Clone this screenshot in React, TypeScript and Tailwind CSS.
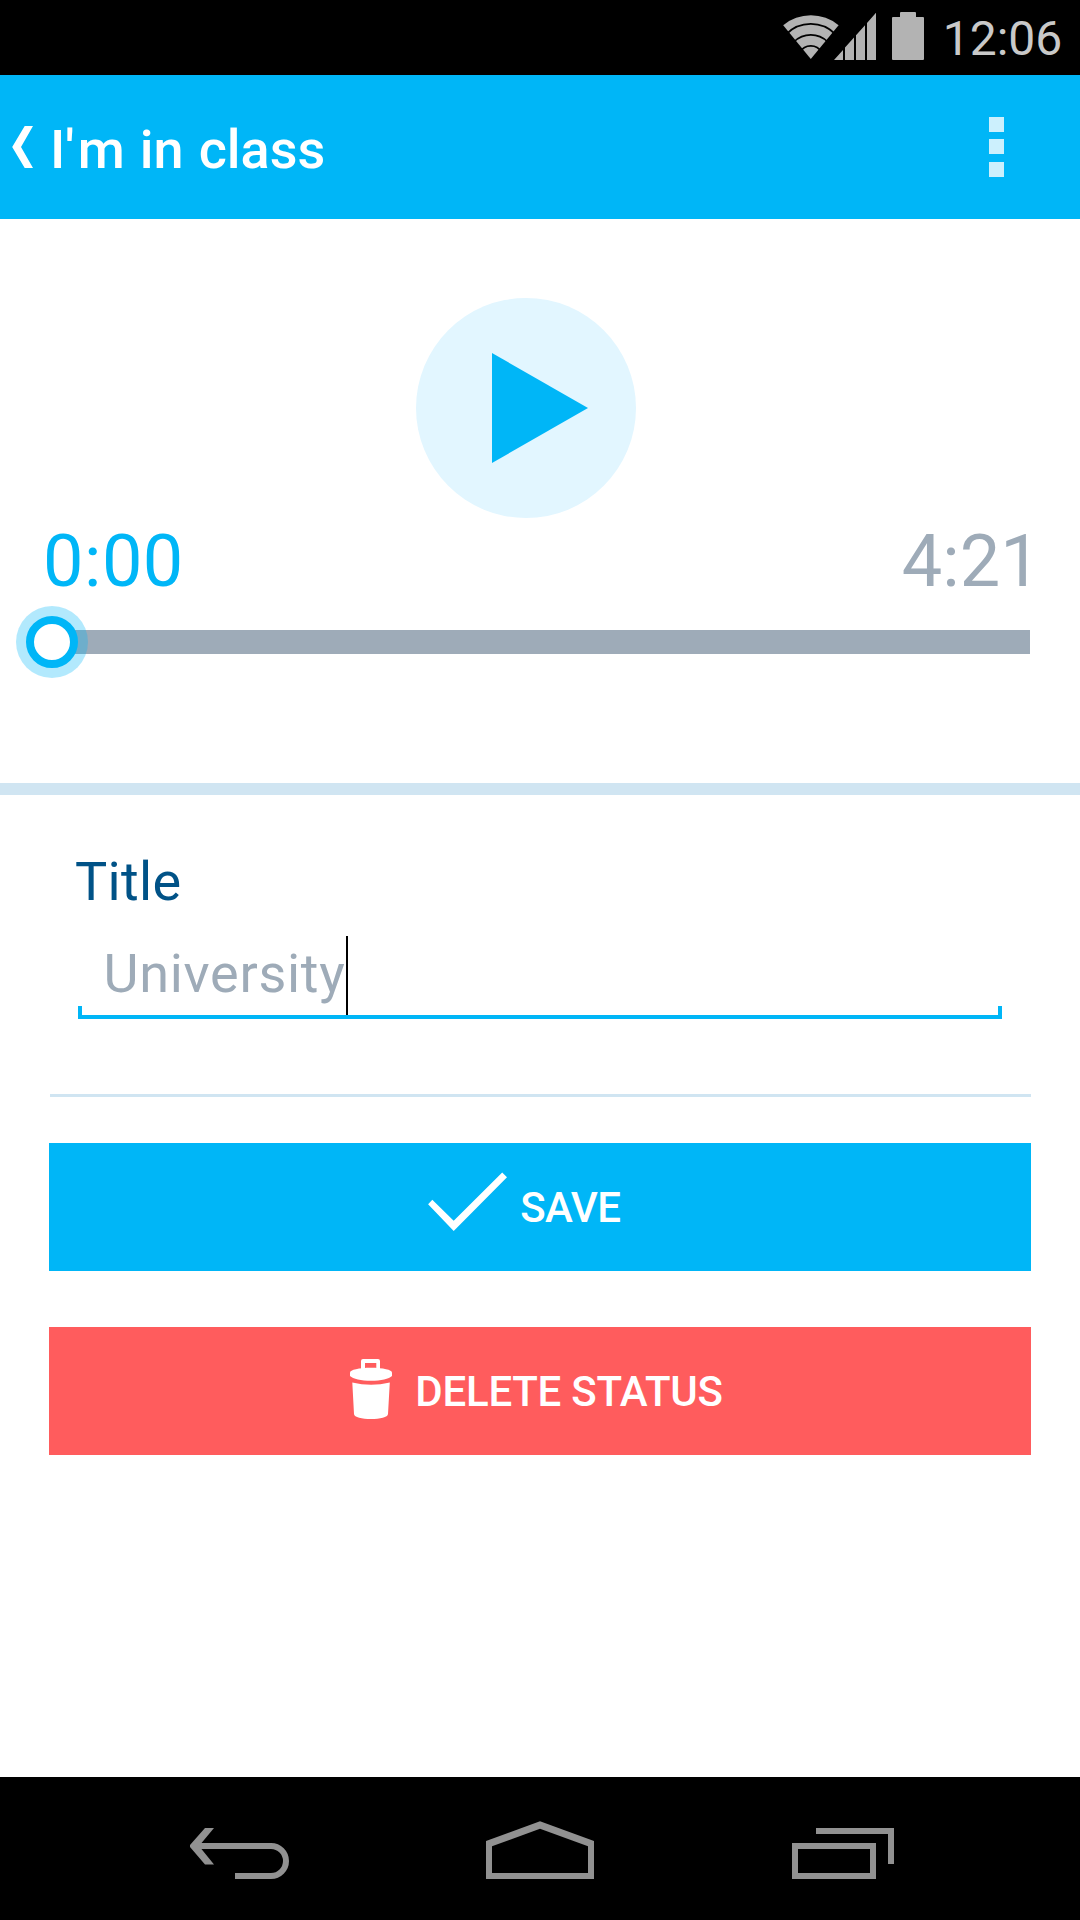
function StatusBar() {
  return (
    <div className="flex h-[75px] items-start bg-black">
      <svg className="ml-[783px] mt-3 h-12 w-[142px] shrink-0" viewBox="783 12 142 48" fill="#b3b3b3">
        <path d="M810.8 59 L783.2 25.2 A43.8 43.8 0 0 1 838.6 25.2 Z" />
        <g fill="none" stroke="#000" strokeWidth="1.8">
          <path d="M786 34.3 A34.6 34.6 0 0 1 835.6 34.3" />
          <path d="M794 41.8 A23.8 23.8 0 0 1 827.6 41.8" />
          <path d="M800 52.2 A12.4 12.4 0 0 1 821.6 52.2" />
        </g>
        <path d="M834 60 L843 50 V60 Z M845 47.6 L854 37.6 V60 H845 Z M856 35.3 L865 25.2 V60 H856 Z M867 23 L876 12.7 V60 H867 Z" />
        <path d="M893 17 H900 V13 Q900 12 901 12 H915 Q916 12 916 13 V17 H923 Q924 17 924 18 V59 Q924 60 923 60 H893 Q892 60 892 59 V18 Q892 17 893 17 Z" />
      </svg>
      <span className="ml-[17.7px] mt-[10px] text-[48px] leading-[57px] whitespace-nowrap text-[#c9c9c9]">12:06</span>
    </div>
  );
}

function Header() {
  return (
    <header className="flex h-36 items-center bg-[#00b6f7] text-white">
      <svg className="ml-3 h-[42px] w-[22px]" viewBox="0 0 22 42" fill="currentColor">
        <path d="M12.7 0 H21 L9 21 L21 42 H12.7 L0.2 21 Z" />
      </svg>
      <h1 className="ml-4 mt-[5px] text-[54px] leading-[63px] font-medium [word-spacing:1.6px] whitespace-nowrap">
        I<span className="tracking-[3.4px]">'</span>m in class
      </h1>
      <button aria-label="More options" className="mr-[76px] ml-auto flex h-[60px] w-[15px] flex-col">
        <span className="h-[15px] w-full bg-[#ccf0fd]" />
        <span className="mt-[7px] h-[15px] w-full bg-[#ccf0fd]" />
        <span className="mt-2 h-[15px] w-full bg-[#ccf0fd]" />
      </button>
    </header>
  );
}

function Player() {
  return (
    <section className="h-[576px] border-b-[12px] border-[#d0e5f2] pt-[79px]">
      <button aria-label="Play" className="ml-[416px] block size-[220px] rounded-full bg-[#e2f6ff]">
        <svg viewBox="0 0 220 220" fill="#00b6f7">
          <path d="M76 55 L172 110 L76 165 Z" />
        </svg>
      </button>
      <div className="mt-px flex justify-between pr-[39.4px] pl-[43px] text-[72px] leading-[85px]">
        <span className="tracking-[0.5px] text-[#00b6f7]">0:00</span>
        <span className="text-[#9eabb8]">4:21</span>
      </div>
      <div className="relative mt-[26px] mr-[50px] ml-[52px] h-6 bg-[#9eabb8]">
        <div className="absolute -top-6 -left-9 flex size-[72px] items-center justify-center rounded-full bg-[#00b6f7]/30">
          <div className="size-[52px] rounded-full border-8 border-[#00b6f7] bg-white" />
        </div>
      </div>
    </section>
  );
}

function Form() {
  return (
    <section className="flex flex-col pt-[55px]">
      <label className="ml-[75px] text-[54px] leading-[63px] tracking-[0.35px] text-[#005287]">Title</label>
      <div className="relative mt-[23px] mr-[78px] ml-[78px] flex h-[83px] items-start border-b-4 border-[#00b6f7]">
        <span className="mt-[6px] ml-[25.5px] w-[242.5px] text-[54px] leading-[63px] tracking-[0.7px] whitespace-nowrap text-[#9eabb8]">University</span>
        <span className="h-[79px] w-[2px] bg-black" />
        <span className="absolute bottom-0 left-0 h-[9px] w-1 bg-[#00b6f7]" />
        <span className="absolute right-0 bottom-0 h-[9px] w-1 bg-[#00b6f7]" />
      </div>
      <hr className="mt-[75px] mr-[49px] ml-[50px] h-[3px] border-0 bg-[#d0e5f2]" />
      <button className="mx-[49px] mt-[46px] flex h-32 items-start bg-[#00b6f7] text-[42px] leading-[49px] font-medium text-white">
        <svg className="mt-[29px] ml-[379px] h-[59px] w-[79px]" viewBox="428 1172 79 59" fill="currentColor">
          <path d="M428.1 1204.3 L432.3 1199.8 L453.7 1220.8 L502.2 1172.4 L507 1177.3 L453.7 1231 Z" />
        </svg>
        <span className="mt-10 ml-[13.2px] tracking-[-0.5px]">SAVE</span>
      </button>
      <button className="mx-[49px] mt-14 flex h-32 items-start bg-[#ff5c5d] text-[42px] leading-[49px] font-medium text-white">
        <svg className="mt-8 ml-[301px] h-[60px] w-[42px]" viewBox="350 1359 42 60" fill="currentColor">
          <path fillRule="evenodd" d="M361 1369 V1361 Q361 1359 363 1359 H378 Q380 1359 380 1361 V1369 Z M365 1363 V1369 H376.3 V1363 Z" />
          <path d="M350 1372.5 C350 1370 359 1367.8 371 1367.8 C383 1367.8 392 1370 392 1372.5 V1376 C389 1379 381 1380.8 371 1380.8 C361 1380.8 353 1379 350 1376 Z" />
          <path d="M352.3 1382.5 Q371 1387 389.8 1382.5 L388 1414 C387.8 1417.5 380 1419 371 1419 C362 1419 354.2 1417.5 354 1414 Z" />
        </svg>
        <span className="mt-10 ml-[23.3px] tracking-[-0.25px] whitespace-nowrap">DELETE STATUS</span>
      </button>
    </section>
  );
}

function NavBar() {
  return (
    <nav className="mt-auto flex h-[143px] items-start bg-black pt-[43px] text-[#919191]">
      <svg className="ml-[190px] h-[60px] w-[100px]" viewBox="190 1820 100 60">
        <path d="M198 1846 H271 A15 15 0 0 1 271 1876 H235" fill="none" stroke="currentColor" strokeWidth="6" />
        <path d="M205 1828 H214 L199 1846 L214 1864.4 H205 L190 1847 V1845 Z" fill="currentColor" />
      </svg>
      <svg className="ml-[196px] h-[60px] w-[108px]" viewBox="486 1820 108 60" fill="currentColor">
        <path fillRule="evenodd" d="M540 1821.2 L594 1841 V1879 H486 V1841 Z M540 1828.8 L492 1846.2 V1873 H588 V1846.2 Z" />
      </svg>
      <svg className="ml-[198px] h-[60px] w-[102px]" viewBox="792 1820 102 60" fill="none" stroke="currentColor" strokeWidth="6">
        <rect x="795" y="1846" width="78" height="30" />
        <path d="M816 1831 H891 V1864" />
      </svg>
    </nav>
  );
}

export default function App() {
  return (
    <div className="flex h-[1920px] w-[1080px] flex-col overflow-hidden bg-white font-[Roboto,sans-serif]">
      <StatusBar />
      <Header />
      <Player />
      <Form />
      <NavBar />
    </div>
  );
}
